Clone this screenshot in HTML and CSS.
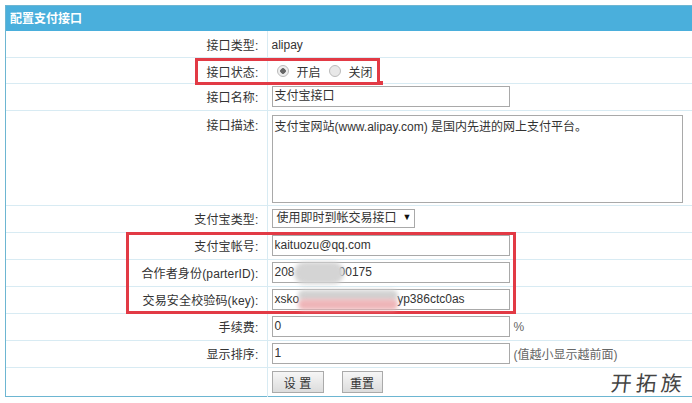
FILE: index.html
```html
<html>

<head>
    <meta charset="utf-8">
    <link rel="stylesheet" href="styles.css">
</head>

<body>
    <div class="panel">
        <div class="panel-title">配置支付接口</div>
        <table class="form-table">
            <tr class="row-sm">
                <td class="label">接口类型:</td>
                <td class="value"><span class="plain">alipay</span></td>
            </tr>
            <tr class="row-sm">
                <td class="label">接口状态:</td>
                <td class="value">
                    <span class="radio checked"></span><span class="radio-text">开启</span><span class="radio"></span><span class="radio-text">关闭</span>
                </td>
            </tr>
            <tr>
                <td class="label">接口名称:</td>
                <td class="value"><div class="input">支付宝接口</div></td>
            </tr>
            <tr class="row-area">
                <td class="label top">接口描述:</td>
                <td class="value top"><div class="textarea">支付宝网站(www.alipay.com) 是国内先进的网上支付平台。</div></td>
            </tr>
            <tr>
                <td class="label">支付宝类型:</td>
                <td class="value"><div class="select">使用即时到帐交易接口<span class="arrow">▼</span></div></td>
            </tr>
            <tr>
                <td class="label">支付宝帐号:</td>
                <td class="value"><div class="input">kaituozu@qq.com</div></td>
            </tr>
            <tr>
                <td class="label">合作者身份(parterID):</td>
                <td class="value"><div class="input">208<span class="gap-a"></span>00175</div></td>
            </tr>
            <tr>
                <td class="label">交易安全校验码(key):</td>
                <td class="value"><div class="input">xsko<span class="gap-b"></span>yp386ctc0as</div></td>
            </tr>
            <tr>
                <td class="label">手续费:</td>
                <td class="value"><div class="input">0</div><span class="note">%</span></td>
            </tr>
            <tr>
                <td class="label">显示排序:</td>
                <td class="value"><div class="input">1</div><span class="note">(值越小显示越前面)</span></td>
            </tr>
            <tr class="row-last">
                <td class="label"></td>
                <td class="value"><button class="btn btn-set">设 置</button><button class="btn">重置</button></td>
            </tr>
        </table>
    </div>

    <div class="mark mark-status"></div>
    <div class="mark mark-tail"></div>
    <div class="mark mark-account"></div>
    <div class="blur blur-a"></div>
    <div class="blur blur-b"></div>
    <div class="blur blur-c"></div>
    <div class="watermark">开拓族</div>
</body>

</html>
```
FILE: styles.css
```css
body {
    font-family: "Liberation Sans", "Noto Sans CJK SC", sans-serif;
    font-size: 12px;
    color: #333;
    background-color: #fff;
    margin: 0;
    padding: 5px 0 0 5px;
    overflow: hidden;
    height: 398px;
    box-sizing: border-box;
}

.panel {
    width: 700px;
    height: 392px;
    box-sizing: border-box;
    border: 1px solid #6db6d2;
    background-color: #fff;
}

.panel-title {
    height: 25px;
    line-height: 26px;
    padding-left: 4px;
    background-color: #4aafdc;
    color: #fff;
    font-weight: bold;
    font-size: 12px;
}

.form-table {
    border-collapse: collapse;
    width: 100%;
    table-layout: fixed;
    font-size: 12px;
    color: #333;
}

.form-table tr {
    height: 27px;
}

.form-table tr.row-sm {
    height: 26px;
}

.form-table tr.row-area {
    height: 95px;
}

.form-table tr.row-last {
    height: 30px;
}

.form-table td {
    border-bottom: 1px solid #d8ebf3;
    padding: 0;
}

.form-table tr.row-sm td {
    padding-top: 2px;
}

.form-table tr:last-child td {
    border-bottom: none;
}

.label {
    width: 261px;
    box-sizing: border-box;
    text-align: right;
    letter-spacing: 0.15px;
    padding-right: 8px !important;
    border-right: 1px solid #d8ebf3;
}

.value {
    padding-left: 4px !important;
    white-space: nowrap;
}

.top {
    vertical-align: top;
    padding-top: 4px !important;
}

.label.top {
    padding-top: 5px !important;
}

.input {
    display: inline-block;
    vertical-align: middle;
    width: 234px;
    height: 19px;
    line-height: 19px;
    border: 1px solid #a9a9a9;
    padding-left: 2px;
    background-color: #fff;
}

.textarea {
    width: 405px;
    height: 78px;
    border: 1px solid #a9a9a9;
    padding: 3px 2px 5px;
    line-height: 16px;
}

.select {
    display: inline-block;
    width: 137px;
    height: 17px;
    line-height: 17px;
    border: 1px solid #a9a9a9;
    padding-left: 4px;
    vertical-align: middle;
    position: relative;
}

.arrow {
    position: absolute;
    right: 2px;
    top: -1px;
    font-size: 9px;
    color: #111;
}

.radio {
    display: inline-block;
    width: 12px;
    height: 12px;
    margin: 0 8px 0 5px;
    box-sizing: border-box;
    border: 1px solid #bbb;
    border-radius: 50%;
    background-color: #e8e8e8;
    vertical-align: 0;
}

.radio.checked {
    background: radial-gradient(circle, #666 0, #666 2.5px, #eee 3px);
}

.radio-text {
    margin-right: 3px;
}

.note {
    margin-left: 4px;
    color: #666;
    vertical-align: middle;
}

.gap-a {
    display: inline-block;
    width: 44px;
}

.gap-b {
    display: inline-block;
    width: 98px;
}

.btn {
    width: 52px;
    height: 22px;
    margin-right: 18px;
    padding: 0;
    font-family: inherit;
    font-size: 12px;
    color: #333;
    border: 1px solid #aaa;
    background: linear-gradient(#f6f6f6, #dcdcdc);
}

.btn + .btn {
    width: 41px;
}

/* red marks and blur patches lie over the form */
.mark {
    position: absolute;
    border: 3px solid #e23a45;
    box-sizing: border-box;
}

.mark-status {
    left: 195px;
    top: 58px;
    width: 185px;
    height: 27px;
}

.mark-tail {
    left: 378px;
    top: 81px;
    width: 5px;
    height: 4px;
    border-width: 0;
    background-color: #e23a45;
}

.mark-account {
    left: 126px;
    top: 232px;
    width: 390px;
    height: 82px;
}

.blur {
    position: absolute;
    border-radius: 12px;
    filter: blur(2px);
}

.blur-a {
    left: 294px;
    top: 262px;
    width: 50px;
    height: 22px;
    background-color: #d4d4d4;
}

.blur-b {
    left: 298px;
    top: 290px;
    width: 100px;
    height: 11px;
    background-color: #d2d2d2;
}

.blur-c {
    left: 298px;
    top: 299px;
    width: 100px;
    height: 11px;
    background-color: #eeb5b8;
}

.watermark {
    position: absolute;
    left: 611px;
    top: 367px;
    font-size: 21px;
    letter-spacing: 4px;
    line-height: 30px;
    color: #444;
    font-family: "Noto Sans CJK SC", sans-serif;
    transform: skewX(-6deg);
}
```
